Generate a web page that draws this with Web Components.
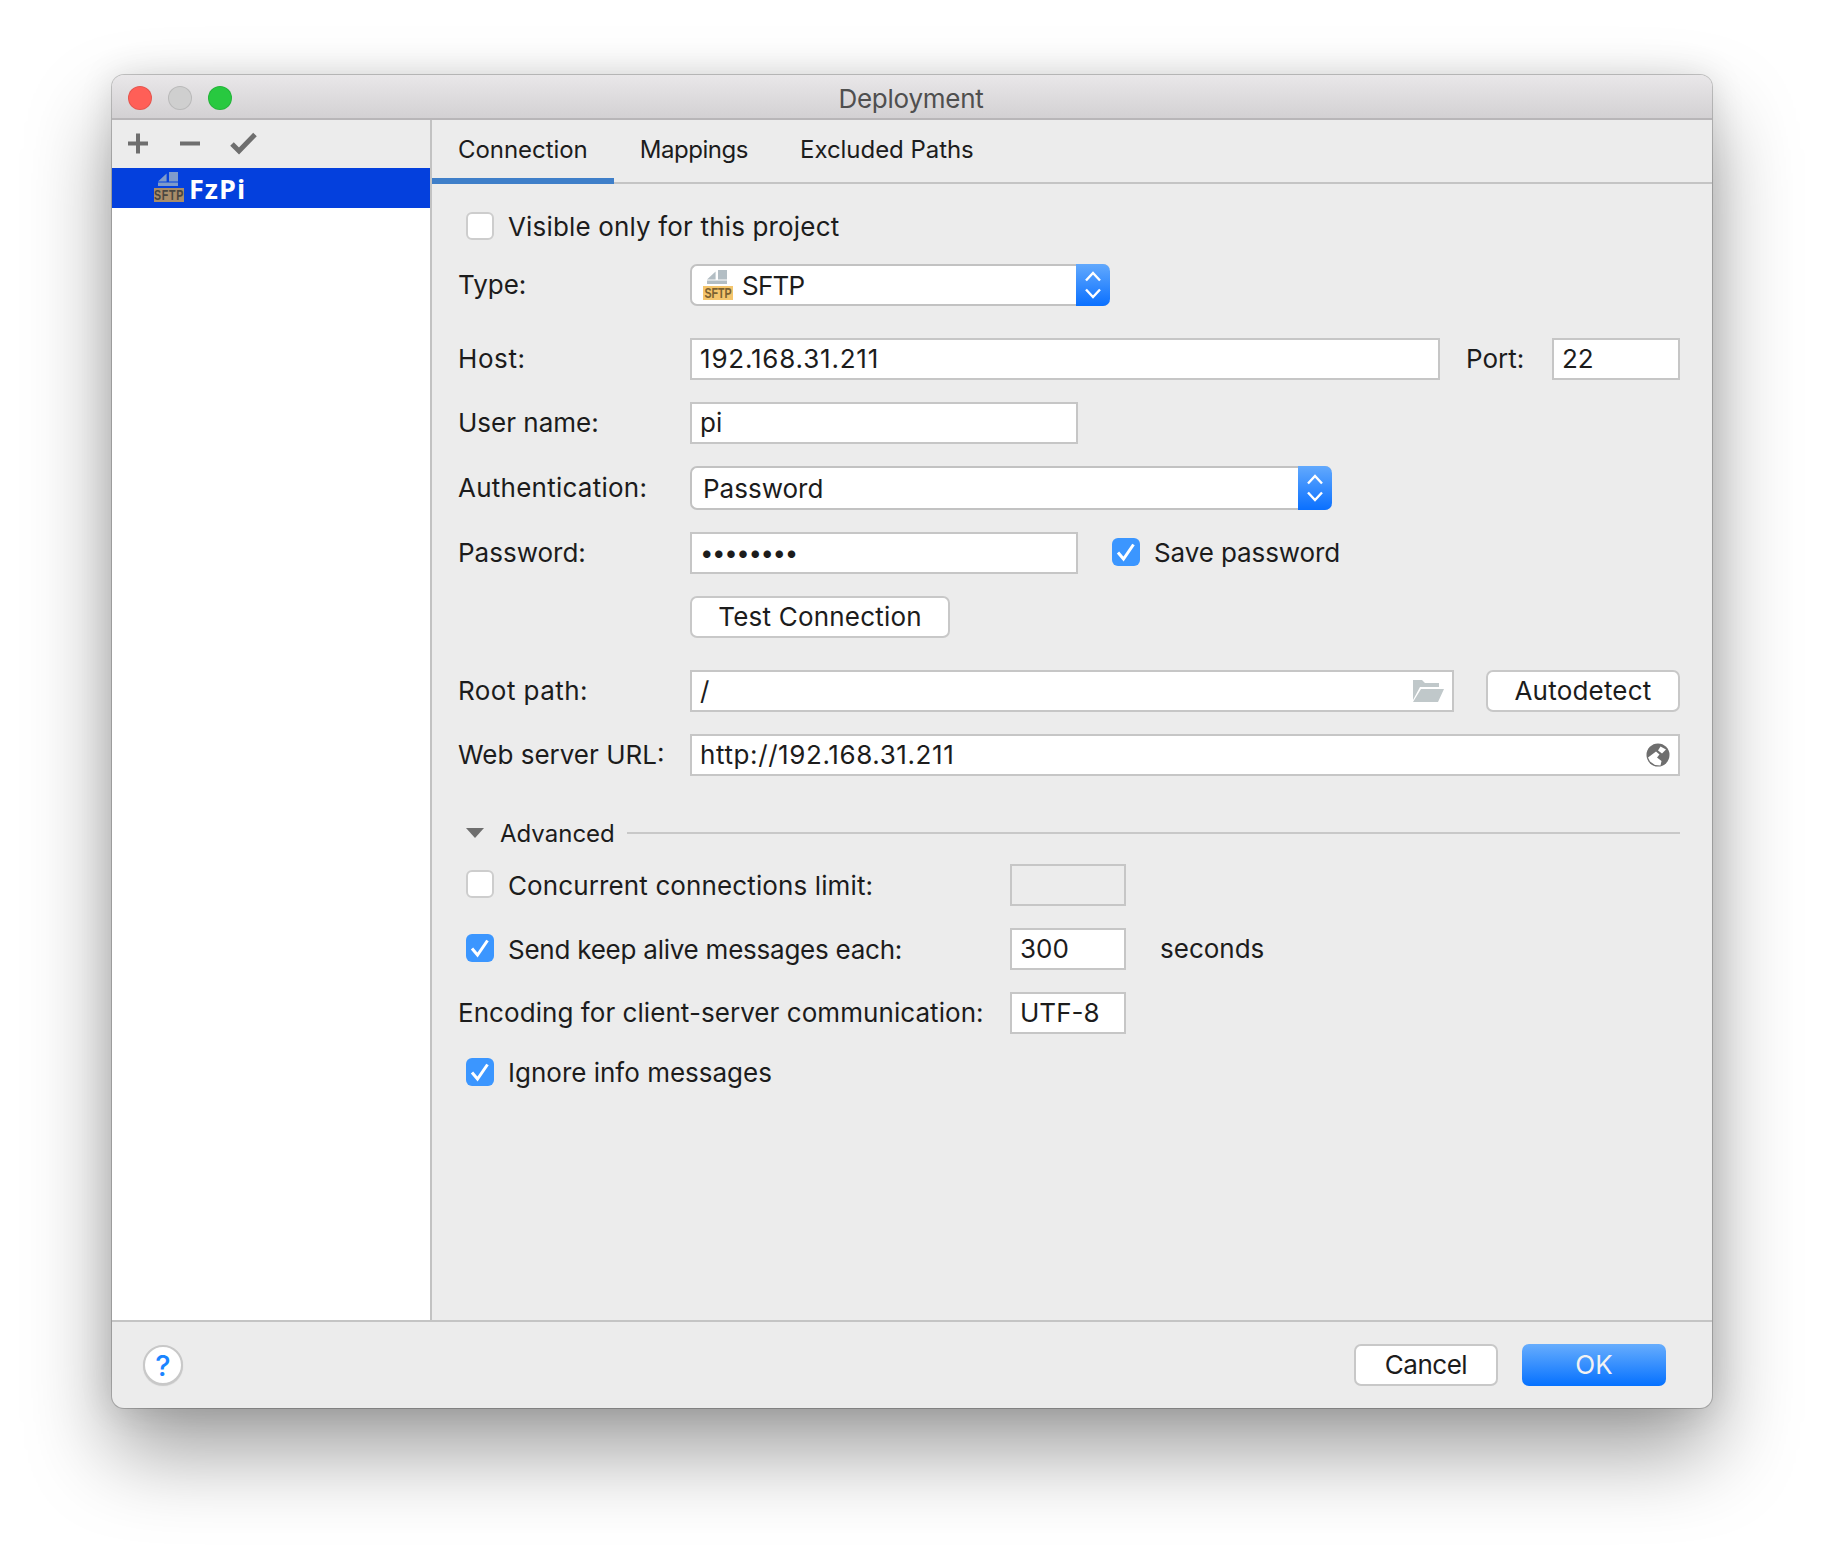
<!DOCTYPE html>
<html>
<head>
<meta charset="utf-8">
<title>Deployment</title>
<style>
  html, body { margin: 0; background: #fff; }
  body { padding: 75px 0 0 112px; height: 1481px; overflow: hidden; font: 26px Inter, "Liberation Sans", sans-serif; color: #1c1c1c; }
</style>
</head>
<body>
<deployment-window title="Deployment">
  <server-list slot="side" name="FzPi"></server-list>
  <tab-bar slot="tabs"></tab-bar>
  <connection-form slot="body"></connection-form>
  <dialog-footer slot="foot"></dialog-footer>
</deployment-window>

<script>
// shared by all elements: open shadow root filled from a string
class Base extends HTMLElement {
  constructor() {
    super();
    this.attachShadow({ mode: 'open' });
    this.shadowRoot.innerHTML = this.markup();
  }
  markup() { return ''; }
}

class SftpIcon extends Base {
  markup() {
    return `<style>
      :host { display: block; width: 30px; height: 30px; flex: none; }
      svg { display: block; }
      text { font: 700 14px "Liberation Sans", sans-serif; }
    </style>
    <svg width="30" height="34" viewBox="0 0 30 34">
      <path d="M4 9.4 12.6 1.6V9.4Z M15 0H24V9.4H15Z M4 10.4H24V14H4Z" fill="var(--doc, #b3bec4)"/>
      <rect x="0" y="16" width="30" height="14" fill="var(--tag, #f4c56c)"/>
      <text transform="translate(15 28) scale(.76 1)" text-anchor="middle" fill="var(--tagtext, #7b6131)">SFTP</text>
    </svg>`;
  }
}
customElements.define('sftp-icon', SftpIcon);

class DeploymentWindow extends Base {
  markup() {
    return `<style>
      :host { display: flex; flex-direction: column; width: 1600px; height: 1333px; background: #ececec; border-radius: 12px;
        box-shadow: 0 0 0 1px rgba(0,0,0,.2), 0 44px 84px rgba(0,0,0,.38), 0 0 34px rgba(0,0,0,.12); }
      .title { flex: none; height: 45px; box-sizing: border-box; padding: 2px 0 0 16px; border-bottom: 2px solid #b8b6b8; border-radius: 12px 12px 0 0;
        background: linear-gradient(#e9e7e9, #d3d1d3); display: flex; align-items: center; position: relative; }
      .dot { width: 24px; height: 24px; border-radius: 50%; box-sizing: border-box; margin-right: 16px; border: 1px solid rgba(0,0,0,.1); }
      .title span { position: absolute; left: 0; right: 2px; top: 8px; text-align: center; color: #4f4f4f; letter-spacing: -.25px; }
      .main { flex: 1; display: flex; min-height: 0; }
      .side { width: 318px; background: #fff; border-right: 2px solid #c2c2c2; flex: none; }
      .right { flex: 1; display: flex; flex-direction: column; min-width: 0; }
      .foot { flex: none; height: 86px; border-top: 2px solid #c4c4c4; }
    </style>
    <div class="title">
      <div class="dot" style="background:#ff5f57"></div>
      <div class="dot" style="background:#cfcfcf"></div>
      <div class="dot" style="background:#28c940"></div>
      <span>${this.getAttribute('title')}</span>
    </div>
    <div class="main">
      <div class="side"><slot name="side"></slot></div>
      <div class="right"><slot name="tabs"></slot><slot name="body"></slot></div>
    </div>
    <div class="foot"><slot name="foot"></slot></div>`;
  }
}
customElements.define('deployment-window', DeploymentWindow);

class ServerList extends Base {
  markup() {
    return `<style>
      :host { display: block; }
      .tools { height: 48px; background: #ececec; display: block; }
      .row { height: 40px; background: #0440dd; display: flex; align-items: center; padding-left: 42px; gap: 5px; color: #fff;
        font: 700 27px "Open Sans", sans-serif; letter-spacing: 1px; --doc: #7f9bcb; --tag: #a98d69; --tagtext: #4a4640; }
      sftp-icon { margin-top: -8px; margin-bottom: -6px; }
    </style>
    <svg class="tools" width="318" height="48" viewBox="0 0 318 48">
      <path d="M16 23.5H36M26 13.5V33.5" stroke="#6e6e6e" stroke-width="4" fill="none"/>
      <path d="M68 23.5H88" stroke="#6e6e6e" stroke-width="4" fill="none"/>
      <path d="M120 24l7 7L143 14.5" stroke="#6e6e6e" stroke-width="5" fill="none"/>
    </svg>
    <div class="row"><sftp-icon></sftp-icon><span>${this.getAttribute('name')}</span></div>`;
  }
}
customElements.define('server-list', ServerList);

class TabBar extends Base {
  markup() {
    return `<style>
      :host { display: flex; height: 64px; box-sizing: border-box; border-bottom: 2px solid #c4c4c4; flex: none; font-size: 24px; letter-spacing: -.05px; }
      div { padding: 0 26px; height: 58px; line-height: 60px; }
      .on { height: 64px; box-sizing: border-box; border-bottom: 6px solid #3f7fc9; margin-bottom: -2px; }
    </style>
    <div class="on">Connection</div><div style="letter-spacing:-.45px">Mappings</div><div>Excluded Paths</div>`;
  }
}
customElements.define('tab-bar', TabBar);

class CheckBox extends Base {
  markup() {
    const on = this.hasAttribute('checked');
    return `<style>
      :host { display: inline-flex; align-items: center; gap: 14px; height: 28px; }
      .box { width: 28px; height: 28px; box-sizing: border-box; border-radius: 6px; flex: none; background: #fff; border: 2px solid #cdcdcd; margin-bottom: var(--bx, 0); }
      .box.on { background: #3b96ff; border: none; }
      svg { display: block; }
    </style>
    <div class="box ${on ? 'on' : ''}">${on ? `<svg width="28" height="28"><path d="M6 14.5l5.5 6.5L21.5 6.5" stroke="#fff" stroke-width="3" fill="none"/></svg>` : ''}</div>
    <span><slot></slot></span>`;
  }
}
customElements.define('check-box', CheckBox);

class TextField extends Base {
  markup() {
    return `<style>
      :host { display: flex; align-items: center; justify-content: space-between; height: 42px; box-sizing: border-box; border: 2px solid #c6c6c6;
        background: #fff; padding: 0 8px 2px 8px; white-space: nowrap; }
      :host([disabled]) { background: #ececec; }
      ::slotted(svg) { margin-bottom: -2px; }
    </style><span><slot></slot></span><slot name="icon"></slot>`;
  }
}
customElements.define('text-field', TextField);

class ComboBox extends Base {
  markup() {
    return `<style>
      :host { display: flex; height: 42px; box-sizing: border-box; border: 2px solid #c2c2c2; border-right: none; border-radius: 7px; background: #fff; }
      .val { flex: 1; display: flex; align-items: center; gap: 9px; padding-left: 11px; }
      .arrows { width: 34px; margin: -2px 0; background: linear-gradient(#62a9fd, #0a70ff); border-radius: 0 7px 7px 0; display: flex; align-items: center; justify-content: center; }
      svg { display: block; }
    </style>
    <div class="val"><slot></slot></div>
    <div class="arrows"><svg width="18" height="28" viewBox="0 0 18 28"><path d="M2 9.5L9 2l7 7.500M2 18.5L9 26l7-7.500" stroke="#fff" stroke-width="2.4" fill="none"/></svg></div>`;
  }
}
customElements.define('combo-box', ComboBox);

class PushButton extends Base {
  markup() {
    return `<style>
      :host { display: flex; align-items: center; justify-content: center; height: 42px; box-sizing: border-box; padding-bottom: 2px; border: 2px solid #c8c8c8; border-radius: 7px; background: #fff; flex: none; }
      :host([primary]) { border: none; background: linear-gradient(#67adfd, #0571ff); color: #f2f2f2; }
    </style><slot></slot>`;
  }
}
customElements.define('push-button', PushButton);

class FormRow extends Base {
  markup() {
    const label = this.getAttribute('label');
    return `<style>
      :host { display: flex; align-items: center; white-space: nowrap; }
      .l { width: 232px; flex: none; padding-bottom: 2px; letter-spacing: var(--ls, 0); }
    </style>${label !== null ? `<div class="l">${label}</div>` : ''}<slot></slot>`;
  }
}
customElements.define('form-row', FormRow);

class ConnectionForm extends Base {
  markup() {
    return `<style>
      :host { display: block; padding: 28px 32px 0 26px; }
      .ind { margin-left: 8px; }
      .grow { flex: 1; }
      .w388 { width: 388px; flex: none; }
      .m24 { margin-top: 24px; } .m32 { margin-top: 32px; } .m22 { margin-top: 22px; } .m18 { margin-top: 18px; }
      .port { width: 86px; margin-left: 26px; flex: none; padding-bottom: 2px; }
      .num { width: 116px; flex: none; }
      .adv { display: flex; align-items: center; height: 26px; margin-top: 44px; }
      .adv i { width: 0; height: 0; margin-left: 8px; border: 9px solid transparent; border-top: 10px solid #6e6e6e; border-bottom: 0; }
      .adv span { margin-left: 16px; margin-right: 12px; font-size: 24px; }
      .adv b { flex: 1; height: 2px; background: #c8c8c8; }
      .col { width: 544px; flex: none; display: flex; align-items: center; --bx: 2px; }
      svg { display: block; }
    </style>
    <form-row><check-box class="ind" style="letter-spacing:.16px">Visible only for this project</check-box></form-row>
    <form-row class="m24" label="Type:"><combo-box style="width:420px"><sftp-icon></sftp-icon><span style="letter-spacing:-.8px">SFTP</span></combo-box></form-row>
    <form-row class="m32" label="Host:" style="--ls:.6px"><text-field class="grow" style="letter-spacing:.8px">192.168.31.211</text-field><span class="port">Port:</span><text-field style="width:128px;flex:none">22</text-field></form-row>
    <form-row class="m22" label="User name:"><text-field class="w388">pi</text-field></form-row>
    <form-row class="m22" label="Authentication:" style="--ls:.25px"><combo-box style="width:642px;height:44px">Password</combo-box></form-row>
    <form-row class="m22" label="Password:"><text-field class="w388" style="font-size:24px;letter-spacing:-1.4px">••••••••</text-field><check-box checked style="margin:0 0 2px 34px;letter-spacing:-.1px">Save password</check-box></form-row>
    <form-row class="m22" label=""><push-button style="width:260px;letter-spacing:.2px">Test Connection</push-button></form-row>
    <form-row class="m32" label="Root path:" style="--ls:.45px"><text-field class="grow">/<svg slot="icon" width="32" height="24" viewBox="0 0 32 24"><path d="M1 1H10L13 4H27V8H8L1 21Z M9 10H32L26 23H1Z" fill="#c0c8ca"/></svg></text-field><push-button style="width:194px;margin-left:32px;letter-spacing:.2px">Autodetect</push-button></form-row>
    <form-row class="m22" label="Web server URL:"><text-field class="grow" style="letter-spacing:.6px">http://192.168.31.211<svg slot="icon" width="24" height="24" viewBox="0 0 24 24"><circle cx="12" cy="12" r="11.5" fill="#6e6e6e"/><path d="M2 14.5 10 8.500l3.5 3-2.5 3 4.5 3.5-1 4.500-5.500-.5-5-3.500z M14.500 3.500 20 6.500l-4 4-4-3z" fill="#fff"/></svg></text-field></form-row>
    <div class="adv"><i></i><span>Advanced</span><b></b></div>
    <form-row class="m18"><div class="col ind" style="letter-spacing:.12px"><check-box>Concurrent connections limit:</check-box></div><text-field class="num" disabled></text-field></form-row>
    <form-row class="m22"><div class="col ind" style="letter-spacing:-.24px"><check-box checked>Send keep alive messages each:</check-box></div><text-field class="num">300</text-field><span style="margin-left:34px;padding-bottom:2px">seconds</span></form-row>
    <form-row class="m22"><div style="width:552px;flex:none;padding-bottom:2px;letter-spacing:.06px">Encoding for client-server communication:</div><text-field class="num">UTF-8</text-field></form-row>
    <form-row class="m24"><check-box checked class="ind">Ignore info messages</check-box></form-row>`;
  }
}
customElements.define('connection-form', ConnectionForm);

class DialogFooter extends Base {
  markup() {
    return `<style>
      :host { display: flex; align-items: center; height: 86px; padding: 0 46px 0 31px; }
      .help { width: 40px; height: 40px; box-sizing: border-box; border-radius: 50%; background: #fff; border: 2px solid #c8c8c8; box-shadow: 0 1px 1px rgba(0,0,0,.15);
        color: #1a84ff; display: flex; align-items: center; justify-content: center; font-size: 29px; font-weight: 500; }
      .sp { flex: 1; }
      push-button { width: 144px; }
    </style>
    <div class="help">?</div><div class="sp"></div>
    <push-button style="letter-spacing:-.5px">Cancel</push-button>
    <push-button primary style="margin-left:24px">OK</push-button>`;
  }
}
customElements.define('dialog-footer', DialogFooter);
</script>
</body>
</html>
